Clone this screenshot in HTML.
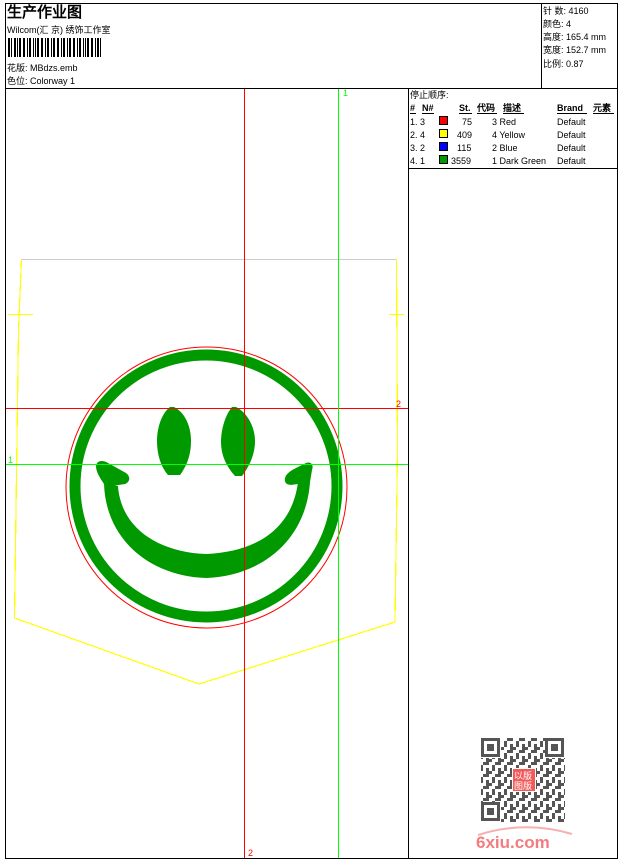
<!DOCTYPE html>
<html><head><meta charset="utf-8"><style>
html,body{margin:0;padding:0;background:#fff;width:620px;height:860px;overflow:hidden}
.t{font-family:"Liberation Sans","WenQuanYi Zen Hei",sans-serif;font-size:9px;fill:#000}
</style></head><body>
<svg width="620" height="860" viewBox="0 0 620 860" xmlns="http://www.w3.org/2000/svg" shape-rendering="crispEdges">
<defs>
<pattern id="qr" width="12" height="12" patternUnits="userSpaceOnUse">
<rect x="0" y="0" width="3" height="3" fill="#555"/><rect x="6" y="0" width="3" height="6" fill="#555"/>
<rect x="3" y="6" width="6" height="3" fill="#555"/><rect x="0" y="9" width="3" height="3" fill="#555"/><rect x="9" y="3" width="3" height="3" fill="#555"/>
</pattern>
</defs>
<rect x="5.5" y="3.5" width="612" height="855" fill="none" stroke="#000"/>
<line x1="5" y1="88.5" x2="618" y2="88.5" stroke="#000"/>
<line x1="541.5" y1="3" x2="541.5" y2="88" stroke="#000"/>
<line x1="408.5" y1="88" x2="408.5" y2="858" stroke="#000"/>
<line x1="408" y1="168.5" x2="618" y2="168.5" stroke="#000"/>
<text x="7" y="17" style="font-family:'WenQuanYi Zen Hei',sans-serif;font-size:15px;font-weight:bold">生产作业图</text>
<text x="7" y="33" class="t">Wilcom(汇 京) 绣饰工作室</text>
<g fill="#000">
<rect x="8" y="38" width="2" height="19"/><rect x="11" y="38" width="1" height="19"/><rect x="14" y="38" width="2" height="19"/><rect x="17" y="38" width="1" height="19"/><rect x="19" y="38" width="2" height="19"/><rect x="23" y="38" width="2" height="19"/><rect x="27" y="38" width="1" height="19"/><rect x="29" y="38" width="2" height="19"/><rect x="33" y="38" width="1" height="19"/><rect x="35" y="38" width="1" height="19"/><rect x="37" y="38" width="2" height="19"/><rect x="41" y="38" width="2" height="19"/><rect x="45" y="38" width="1" height="19"/><rect x="47" y="38" width="2" height="19"/><rect x="51" y="38" width="1" height="19"/><rect x="53" y="38" width="2" height="19"/><rect x="57" y="38" width="2" height="19"/><rect x="61" y="38" width="1" height="19"/><rect x="63" y="38" width="2" height="19"/><rect x="67" y="38" width="1" height="19"/><rect x="69" y="38" width="2" height="19"/><rect x="73" y="38" width="2" height="19"/><rect x="77" y="38" width="1" height="19"/><rect x="79" y="38" width="2" height="19"/><rect x="83" y="38" width="1" height="19"/><rect x="85" y="38" width="1" height="19"/><rect x="87" y="38" width="2" height="19"/><rect x="91" y="38" width="2" height="19"/><rect x="95" y="38" width="1" height="19"/><rect x="97" y="38" width="2" height="19"/><rect x="100" y="38" width="1" height="19"/>
</g>
<text x="7" y="71" class="t">花版:  MBdzs.emb</text>
<text x="7" y="84" class="t">色位:  Colorway 1</text>
<text x="543" y="14" class="t">针 数: 4160</text>
<text x="543" y="27" class="t">颜色: 4</text>
<text x="543" y="40" class="t">高度: 165.4 mm</text>
<text x="543" y="53" class="t">宽度: 152.7 mm</text>
<text x="543" y="67" class="t">比例: 0.87</text>
<text x="410" y="98" class="t">停止顺序:</text>
<text x="410" y="111" class="t" font-weight="bold">#</text><text x="422" y="111" class="t" font-weight="bold">N#</text>
<text x="459" y="111" class="t" font-weight="bold">St.</text><text x="477" y="111" class="t" font-weight="bold">代码</text>
<text x="503" y="111" class="t" font-weight="bold">描述</text><text x="557" y="111" class="t" font-weight="bold">Brand</text><text x="593" y="111" class="t" font-weight="bold">元素</text>
<g stroke="#000" stroke-width="1"><line x1="410" y1="113.5" x2="416" y2="113.5"/><line x1="422" y1="113.5" x2="434" y2="113.5"/><line x1="459" y1="113.5" x2="472" y2="113.5"/><line x1="477" y1="113.5" x2="497" y2="113.5"/><line x1="503" y1="113.5" x2="524" y2="113.5"/><line x1="557" y1="113.5" x2="587" y2="113.5"/><line x1="593" y1="113.5" x2="614" y2="113.5"/></g>
<text x="410" y="125" class="t">1. 3</text><rect x="439.5" y="116.5" width="8" height="8" fill="#f00" stroke="#000"/><text x="462" y="125" class="t">75</text><text x="492" y="125" class="t">3  Red</text><text x="557" y="125" class="t">Default</text>
<text x="410" y="138" class="t">2. 4</text><rect x="439.5" y="129.5" width="8" height="8" fill="#ff0" stroke="#000"/><text x="457" y="138" class="t">409</text><text x="492" y="138" class="t">4  Yellow</text><text x="557" y="138" class="t">Default</text>
<text x="410" y="151" class="t">3. 2</text><rect x="439.5" y="142.5" width="8" height="8" fill="#00f" stroke="#000"/><text x="457" y="151" class="t">115</text><text x="492" y="151" class="t">2  Blue</text><text x="557" y="151" class="t">Default</text>
<text x="410" y="164" class="t">4. 1</text><rect x="439.5" y="155.5" width="8" height="8" fill="#090" stroke="#000"/><text x="451" y="164" class="t">3559</text><text x="492" y="164" class="t">1  Dark Green</text><text x="557" y="164" class="t">Default</text>
<!-- pocket -->
<line x1="21" y1="259.5" x2="396" y2="259.5" stroke="#ccc"/>
<polyline points="21.5,259 18.5,330 14.5,618 199,684 395,622 397.5,450 396.5,259" fill="none" stroke="#ff0" stroke-width="1.2"/>
<line x1="8" y1="314.5" x2="33" y2="314.5" stroke="#ff0"/><line x1="389" y1="314.5" x2="404" y2="314.5" stroke="#ff0"/>
<g shape-rendering="auto">
<circle cx="206.5" cy="487.5" r="140.5" fill="none" stroke="#f00" stroke-width="1"/>
<circle cx="206" cy="486" r="131" fill="none" stroke="#090" stroke-width="11"/>
<path d="M174,407 C186,413 191,428 191,441 C191,456 186,467 180,475 L168,475 C161,467 157,455 157,441 C157,427 162,413 170,407 Z" fill="#090"/>
<path d="M236,407 C248,413 255,428 255,441 C255,456 248,468 242,476 L235,476 C226,466 221,455 221,442 C221,428 226,414 232,407 Z" fill="#090"/>
<path d="M104,484 C106,540 150,576 206,578 C262,576 306,540 310,482 L298,482 C292,530 255,552 206,554 C158,552 121,528 118,486 Z" fill="#090"/>
<path d="M96,466 C97,460 103,460 108,463 L126,473 C131,477 130,482 125,484 L112,486 L104,484 C100,478 96,472 96,466 Z" fill="#090"/>
<path d="M285,481 C284,475 290,471 296,468 L306,463 C311,461 314,465 312,470 L310,482 L298,484 C292,485 286,486 285,481 Z" fill="#090"/>
</g>
<line x1="244.5" y1="89" x2="244.5" y2="858" stroke="#f00"/>
<line x1="6" y1="408.5" x2="408" y2="408.5" stroke="#f00"/>
<line x1="338.5" y1="89" x2="338.5" y2="858" stroke="#0f0"/>
<line x1="6" y1="464.5" x2="408" y2="464.5" stroke="#0f0"/>
<text x="396" y="407" style="font-family:'Liberation Sans',sans-serif;font-size:9px;fill:#f00">2</text>
<text x="248" y="856" style="font-family:'Liberation Sans',sans-serif;font-size:9px;fill:#f00">2</text>
<text x="8" y="463" style="font-family:'Liberation Sans',sans-serif;font-size:9px;fill:#0f0">1</text>
<text x="343" y="96" style="font-family:'Liberation Sans',sans-serif;font-size:9px;fill:#0f0">1</text>
<rect x="481" y="738" width="84" height="84" fill="url(#qr)"/>
<g fill="#fff"><rect x="481" y="738" width="20" height="20"/><rect x="545" y="738" width="20" height="20"/><rect x="481" y="802" width="20" height="20"/></g>
<g fill="none" stroke="#555" stroke-width="3"><rect x="482.5" y="739.5" width="16" height="16"/><rect x="546.5" y="739.5" width="16" height="16"/><rect x="482.5" y="803.5" width="16" height="16"/></g>
<g fill="#555"><rect x="487" y="744" width="7" height="7"/><rect x="551" y="744" width="7" height="7"/><rect x="487" y="808" width="7" height="7"/></g>
<rect x="512" y="768" width="24" height="24" fill="#fff"/>
<rect x="513" y="769" width="22" height="22" fill="#f25a5a"/>
<text x="514" y="779" style="font-family:'WenQuanYi Zen Hei',sans-serif;font-size:9px;fill:#fff">以版</text>
<text x="514" y="789" style="font-family:'WenQuanYi Zen Hei',sans-serif;font-size:9px;fill:#fff">图版</text>
<path d="M478,835 Q525,820 572,834" fill="none" stroke="#f7b0b0" stroke-width="2" shape-rendering="auto"/>
<text x="476" y="848" style="font-family:'Liberation Sans',sans-serif;font-size:17px;font-weight:bold;fill:#f47c80">6xiu.com</text>
</svg>
</body></html>
